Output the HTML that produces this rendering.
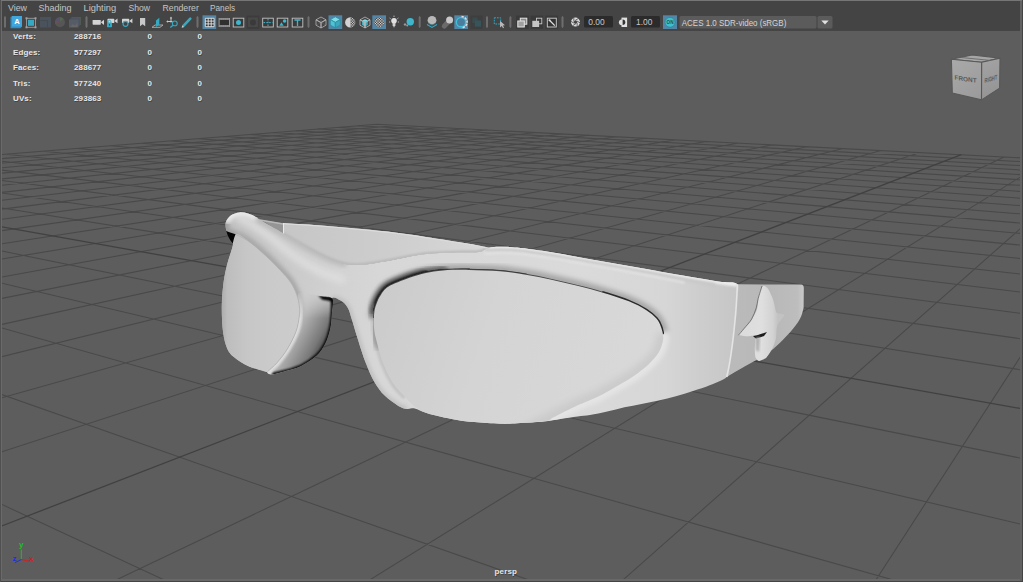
<!DOCTYPE html>
<html><head><meta charset="utf-8"><title>persp</title>
<style>
html,body{margin:0;padding:0;background:#444;}
body{width:1023px;height:582px;overflow:hidden;position:relative;font-family:"Liberation Sans",sans-serif;}
svg{position:absolute;left:0;top:0;display:block}
text{font-family:"Liberation Sans",sans-serif}
</style></head><body>
<svg width="1023" height="582" viewBox="0 0 1023 582">
<defs>
<clipPath id="vp"><rect x="2" y="31" width="1018" height="548"/></clipPath>

<linearGradient id="gFrame" x1="226" y1="0" x2="737" y2="0" gradientUnits="userSpaceOnUse">
<stop offset="0" stop-color="#bebebe"/><stop offset="0.1" stop-color="#c8c8c8"/><stop offset="0.22" stop-color="#d2d2d2"/><stop offset="0.3" stop-color="#d7d7d7"/><stop offset="0.7" stop-color="#dadada"/><stop offset="0.86" stop-color="#d6d6d6"/><stop offset="0.93" stop-color="#cdcdcd"/><stop offset="1" stop-color="#c6c6c6"/></linearGradient>
<linearGradient id="gLensL" x1="222" y1="300" x2="300" y2="300" gradientUnits="userSpaceOnUse">
<stop offset="0" stop-color="#aeaeae"/><stop offset="0.07" stop-color="#bdbdbd"/><stop offset="0.3" stop-color="#c6c6c6"/><stop offset="0.6" stop-color="#cacaca"/><stop offset="1" stop-color="#cccccc"/></linearGradient>
<linearGradient id="gLensR" x1="380" y1="290" x2="660" y2="380" gradientUnits="userSpaceOnUse">
<stop offset="0" stop-color="#cbcbcb"/><stop offset="0.4" stop-color="#d4d4d4"/><stop offset="1" stop-color="#d9d9d9"/></linearGradient>
<linearGradient id="gArmIn" x1="283" y1="0" x2="488" y2="0" gradientUnits="userSpaceOnUse">
<stop offset="0" stop-color="#c6c6c6"/><stop offset="0.5" stop-color="#cdcdcd"/><stop offset="1" stop-color="#d8d8d8"/></linearGradient>
<linearGradient id="gNose" x1="285" y1="320" x2="330" y2="345" gradientUnits="userSpaceOnUse">
<stop offset="0" stop-color="#d8d8d8"/><stop offset="0.3" stop-color="#b4b4b4"/><stop offset="0.75" stop-color="#787878"/><stop offset="1" stop-color="#383838"/></linearGradient>
<linearGradient id="gArmR" x1="737" y1="0" x2="804" y2="0" gradientUnits="userSpaceOnUse">
<stop offset="0" stop-color="#bababa"/><stop offset="0.5" stop-color="#b8b8b8"/><stop offset="0.9" stop-color="#bdbdbd"/><stop offset="1" stop-color="#cacaca"/></linearGradient>
<linearGradient id="gProp" x1="745" y1="0" x2="778" y2="0" gradientUnits="userSpaceOnUse">
<stop offset="0" stop-color="#dcdcdc"/><stop offset="0.5" stop-color="#dfdfdf"/><stop offset="0.85" stop-color="#d2d2d2"/><stop offset="1" stop-color="#c2c2c2"/></linearGradient>
<linearGradient id="gCubeF" x1="952" y1="60" x2="981" y2="99" gradientUnits="userSpaceOnUse"><stop offset="0" stop-color="#a9a9a9"/><stop offset="1" stop-color="#9a9a9a"/></linearGradient><linearGradient id="gCubeR" x1="982" y1="62" x2="999" y2="95" gradientUnits="userSpaceOnUse"><stop offset="0" stop-color="#a2a2a2"/><stop offset="1" stop-color="#949494"/></linearGradient><filter id="b04"><feGaussianBlur stdDeviation="0.45"/></filter><filter id="b08"><feGaussianBlur stdDeviation="0.7"/></filter><filter id="b25"><feGaussianBlur stdDeviation="2.6"/></filter><filter id="b1"><feGaussianBlur stdDeviation="1"/></filter>
<filter id="b2"><feGaussianBlur stdDeviation="2"/></filter>
<filter id="b3"><feGaussianBlur stdDeviation="3.5"/></filter>
<linearGradient id="gFade" x1="0" y1="290" x2="0" y2="318" gradientUnits="userSpaceOnUse"><stop offset="0" stop-color="#000"/><stop offset="1" stop-color="#fff"/></linearGradient>
<mask id="mNose" maskUnits="userSpaceOnUse" x="260" y="285" width="80" height="95"><rect x="260" y="285" width="80" height="95" fill="url(#gFade)"/></mask>
<clipPath id="cFrame"><path d="M226.5 230.6C225.8 228.8 225.1 224.9 225.8 222.3C226.6 219.8 228.7 217.0 231.0 215.3C233.3 213.7 236.6 212.7 239.4 212.4C242.2 212.1 245.2 212.7 248.0 213.5C250.8 214.3 254.4 216.1 256.5 217.2C258.6 218.3 255.8 217.4 260.3 220.1C264.8 222.8 276.7 229.6 283.5 233.6C290.3 237.6 295.2 240.5 301.0 243.8C306.8 247.1 312.8 250.5 318.1 253.2C323.4 255.9 328.3 258.4 333.0 260.2C337.7 262.0 341.4 263.4 346.2 264.2C351.0 265.0 354.4 265.4 361.7 264.8C369.0 264.2 379.3 262.2 390.0 260.4C400.7 258.6 414.2 255.3 425.9 254.0C437.6 252.7 451.5 252.6 460.3 252.3C469.1 252.0 474.8 252.4 478.7 252.0C482.6 251.6 482.2 250.8 484.0 250.0C485.8 249.2 486.6 248.0 489.3 247.5C492.0 247.0 495.4 246.8 500.0 246.8C504.6 246.8 508.6 246.7 517.2 247.6C525.8 248.5 540.0 250.5 551.5 252.3C563.0 254.1 574.4 256.4 585.9 258.4C597.4 260.4 608.8 262.4 620.3 264.4C631.8 266.4 643.9 268.5 654.6 270.4C665.3 272.3 673.7 273.9 684.4 275.8C695.1 277.7 709.9 280.2 718.7 281.6C727.5 283.0 734.4 281.2 737.4 284.3C740.4 287.4 736.9 295.0 736.6 300.0C736.3 305.0 736.1 309.1 735.6 314.4C735.1 319.6 734.5 325.8 733.9 331.5C733.3 337.2 732.6 343.0 731.8 348.7C731.0 354.4 730.0 361.2 729.1 365.9C728.2 370.6 729.8 373.8 726.7 377.0C723.6 380.2 715.9 382.7 710.3 385.0C704.7 387.3 698.8 389.1 693.1 391.0C687.4 392.9 681.6 394.6 675.9 396.2C670.2 397.8 664.4 399.1 658.7 400.4C653.0 401.7 647.2 402.8 641.5 403.9C635.8 405.0 630.1 406.0 624.4 407.3C618.7 408.6 612.9 410.3 607.2 411.6C601.5 412.9 595.0 414.2 590.0 415.0C585.0 415.8 582.5 415.8 577.5 416.5C572.5 417.2 566.0 418.1 560.3 419.0C554.6 419.9 550.3 420.9 543.1 421.6C535.9 422.3 524.5 422.9 517.3 423.3C510.1 423.7 507.2 424.0 500.1 423.8C493.0 423.6 481.5 422.8 474.4 422.1C467.2 421.5 462.9 420.8 457.2 419.9C451.5 419.0 445.2 417.7 440.0 416.5C434.8 415.3 430.1 414.1 425.9 412.8C421.7 411.5 417.8 409.1 414.7 408.5C411.6 407.9 409.7 409.4 407.0 409.0C404.3 408.6 402.1 408.1 398.4 405.9C394.7 403.7 388.7 399.6 384.7 395.6C380.7 391.6 377.5 387.3 374.4 381.9C371.2 376.5 368.7 370.4 365.8 363.0C362.9 355.6 359.5 344.4 357.2 337.2C354.9 330.0 353.6 324.9 352.0 320.0C350.4 315.1 349.5 310.7 347.6 307.5C345.7 304.3 343.3 302.2 340.7 300.6C338.1 299.0 333.5 296.3 332.1 298.0C330.7 299.7 332.4 305.9 332.1 310.9C331.8 315.9 331.5 322.7 330.4 328.1C329.3 333.6 327.6 339.0 325.3 343.6C323.0 348.2 320.7 351.9 316.7 355.6C312.7 359.3 306.9 363.2 301.2 365.9C295.5 368.6 287.3 370.5 282.3 371.9C277.3 373.3 273.8 374.2 271.2 374.2C268.6 374.2 270.8 373.3 266.9 371.9C263.0 370.5 253.4 368.3 248.0 365.9C242.6 363.5 237.6 360.2 234.2 357.3C230.8 354.4 229.2 353.0 227.3 348.7C225.4 344.4 223.9 338.6 223.0 331.5C222.1 324.4 221.7 314.0 221.8 305.8C221.9 297.6 222.7 289.1 223.6 282.3C224.5 275.5 225.6 270.7 227.0 265.0C228.4 259.3 230.9 252.5 232.2 248.0C233.5 243.5 235.4 240.5 235.0 238.0C234.6 235.5 231.4 234.2 230.0 233.0C228.6 231.8 227.2 232.4 226.5 230.6Z"/></clipPath>
<clipPath id="cLensR"><path d="M373.9 318.0C374.0 315.2 374.1 312.5 374.6 310.0C375.1 307.5 375.8 305.4 376.8 303.0C377.8 300.6 378.6 298.2 380.5 295.5C382.4 292.8 383.6 289.7 388.3 286.8C393.0 283.9 402.4 280.4 408.7 278.1C415.0 275.8 420.2 274.3 425.9 273.0C431.6 271.7 435.9 270.9 443.1 270.4C450.3 269.9 459.4 269.8 468.9 269.9C478.4 270.0 490.5 270.4 500.0 271.2C509.5 272.0 517.2 273.3 525.8 274.7C534.4 276.1 542.9 277.9 551.5 279.8C560.1 281.7 568.7 283.7 577.3 285.8C585.9 287.9 594.5 290.1 603.1 292.7C611.7 295.3 621.8 298.4 628.9 301.3C636.0 304.2 641.4 307.0 646.0 309.9C650.6 312.8 653.9 315.8 656.4 318.5C658.9 321.2 659.7 323.8 660.7 326.2C661.7 328.6 662.2 330.6 662.6 333.0C663.0 335.4 663.6 337.1 663.0 340.3C662.4 343.5 661.1 348.3 658.7 352.3C656.3 356.3 652.7 360.4 648.4 364.4C644.1 368.4 638.3 372.7 632.9 376.4C627.5 380.1 621.5 383.4 615.8 386.7C610.1 390.0 605.0 393.1 598.6 396.2C592.2 399.3 585.0 401.8 577.5 405.3C570.0 408.8 558.6 414.7 553.4 417.3C548.2 419.9 552.5 419.8 546.5 420.8C540.5 421.8 525.0 422.8 517.3 423.3C509.6 423.8 507.2 424.0 500.1 423.8C493.0 423.6 481.5 422.8 474.4 422.1C467.2 421.5 462.9 420.8 457.2 419.9C451.5 419.0 445.2 417.7 440.0 416.5C434.8 415.3 430.1 414.5 425.9 412.8C421.7 411.1 418.1 409.1 414.7 406.5C411.3 403.9 408.9 401.1 405.3 397.3C401.7 393.5 397.0 389.3 393.3 383.6C389.6 377.9 385.9 370.6 383.0 363.0C380.1 355.4 377.3 344.0 375.8 338.0C374.3 332.0 374.3 330.3 374.0 327.0C373.7 323.7 373.8 320.8 373.9 318.0Z"/></clipPath>
<clipPath id="cLensL"><path d="M235.6 234.2C238.5 233.2 244.2 238.2 249.4 241.9C254.6 245.6 261.4 251.8 266.5 256.5C271.6 261.2 276.3 266.0 280.3 270.3C284.3 274.6 287.9 278.3 290.6 282.3C293.3 286.3 295.2 290.4 296.6 294.3C298.1 298.2 298.9 302.4 299.3 306.0C299.8 309.6 299.9 311.8 299.3 316.0C298.8 320.2 298.0 326.1 296.0 331.5C294.0 336.9 290.6 343.5 287.5 348.7C284.4 353.9 280.5 358.7 277.2 362.5C273.9 366.3 269.4 369.9 267.7 371.5C266.0 373.1 270.2 372.8 266.9 371.9C263.6 371.0 253.4 368.3 248.0 365.9C242.6 363.5 237.6 360.2 234.2 357.3C230.8 354.4 229.2 353.0 227.3 348.7C225.4 344.4 223.9 338.6 223.0 331.5C222.1 324.4 221.7 314.0 221.8 305.8C221.9 297.6 222.7 289.1 223.6 282.3C224.5 275.5 225.6 270.7 227.0 265.0C228.4 259.3 230.8 253.1 232.2 248.0C233.6 242.9 232.7 235.2 235.6 234.2Z"/></clipPath>
<clipPath id="cArmIn"><path d="M283.5 223.0C289.4 223.4 307.1 224.4 318.7 225.3C330.3 226.2 341.6 227.1 353.1 228.2C364.6 229.2 375.4 230.1 387.5 231.6C399.6 233.1 412.3 234.9 425.9 236.9C439.5 238.9 458.6 241.9 468.9 243.7C479.2 245.4 484.6 246.8 487.8 247.4L489.3 247.5C488.4 247.9 485.8 249.2 484.0 250.0C482.2 250.8 482.6 251.6 478.7 252.0C474.8 252.4 469.1 252.0 460.3 252.3C451.5 252.6 437.6 252.7 425.9 254.0C414.2 255.3 400.7 258.6 390.0 260.4C379.3 262.2 369.0 264.2 361.7 264.8C354.4 265.4 351.0 265.0 346.2 264.2C341.4 263.4 337.7 262.0 333.0 260.2C328.3 258.4 323.4 255.9 318.1 253.2C312.8 250.5 306.8 247.1 301.0 243.8C295.2 240.5 286.4 235.3 283.5 233.6Z"/></clipPath><clipPath id="cNose"><path d="M298.8 293.0C295.4 295.7 300.0 305.6 299.5 312.0C299.0 318.4 298.0 325.4 296.0 331.5C294.0 337.6 290.6 343.5 287.5 348.7C284.4 353.9 280.5 358.7 277.2 362.5C273.9 366.3 268.7 369.6 267.7 371.5C266.7 373.4 268.8 374.1 271.2 374.2C273.6 374.3 277.3 373.3 282.3 371.9C287.3 370.5 295.5 368.6 301.2 365.9C306.9 363.2 312.7 359.3 316.7 355.6C320.7 351.9 323.0 348.2 325.3 343.6C327.6 339.0 329.3 333.6 330.4 328.1C331.5 322.7 331.8 315.8 332.1 310.9C332.4 306.0 334.1 301.0 332.1 298.5C330.1 296.0 325.6 296.9 320.0 296.0C314.4 295.1 302.2 290.3 298.8 293.0Z"/></clipPath>
<clipPath id="cTex"><circle cx="379.3" cy="22.3" r="5"/></clipPath><clipPath id="cHalf"><circle cx="350.3" cy="22.4" r="5.2"/></clipPath>
</defs>
<rect x="0" y="0" width="1023" height="582" fill="#444444"/>
<rect x="0" y="0" width="1" height="582" fill="#505050"/>
<rect x="1" y="0" width="1021" height="1" fill="#767676"/>
<rect x="1" y="1" width="1" height="580" fill="#6a6a6a"/>
<rect x="1" y="579" width="1021" height="2" fill="#686868"/>
<rect x="1020" y="1" width="2" height="580" fill="#626262"/>
<rect x="2" y="30" width="1018" height="1" fill="#454545"/>
<rect x="2" y="31" width="1018" height="548" fill="#5d5d5d"/>
<g clip-path="url(#vp)">
<path d="M-111155.5 13200.1L-5584.6 605.4M95047.1 13419.6L2447.0 232.2M-101904.5 13209.9L-4557.9 522.5M88646.2 13412.7L2320.3 225.6M-92653.5 13219.8L-3800.6 461.4M82245.4 13405.9L2202.7 219.4M-83402.5 13229.6L-3218.9 414.5M75844.5 13399.1L2093.2 213.7M-74151.5 13239.5L-2758.1 377.3M69443.7 13392.3L1991.1 208.4M-64900.5 13249.3L-2384.1 347.1M63042.8 13385.5L1895.5 203.4M-55649.5 13259.1L-2074.5 322.1M56642.0 13378.7L1805.9 198.8M-46398.5 13269.0L-1813.9 301.1M50241.2 13371.9L1721.8 194.4M-37147.5 13278.8L-1591.5 283.1M43840.3 13365.1L1642.6 190.2M-27896.5 13288.7L-1399.6 267.7M37439.5 13358.2L1567.9 186.4M-18645.5 13298.5L-1232.3 254.2M31038.6 13351.4L1497.4 182.7M-9394.5 13308.4L-1085.1 242.3M24637.8 13344.6L1430.7 179.2M-143.5 13318.2L-954.6 231.7M18236.9 13337.8L1367.6 175.9M9107.5 13328.1L-838.1 222.3M11836.1 13331.0L1307.7 172.8M18358.5 13337.9L-733.4 213.9M5435.2 13324.2L1250.7 169.8M27609.5 13347.8L-639.0 206.3M-965.6 13317.4L1196.6 167.0M36860.5 13357.6L-553.2 199.4M-7366.5 13310.5L1145.0 164.3M46111.5 13367.5L-475.1 193.0M-13767.3 13303.7L1095.9 161.8M55362.4 13377.3L-403.6 187.3M-20168.2 13296.9L1049.0 159.3M64613.4 13387.2L-337.8 182.0M-26569.0 13290.1L1004.1 157.0M83115.4 13406.9L-221.2 172.6M-39370.7 13276.5L920.2 152.6M92366.4 13416.7L-169.2 168.4M-45771.6 13269.7L880.9 150.6M24593.8 3386.1L-120.9 164.5M-52172.4 13262.8L843.1 148.6M12579.4 1675.1L-75.8 160.8M-58573.3 13256.0L806.9 146.7M8721.6 1125.7L-33.6 157.4M-64974.1 13249.2L772.1 144.9M6819.2 854.8L5.8 154.2M-71375.0 13242.4L738.7 143.1M5686.0 693.4L42.9 151.2M-77775.8 13235.6L706.5 141.5M4934.0 586.3L77.8 148.4M-84176.7 13228.8L675.5 139.9M4398.6 510.1L110.6 145.8M-90577.5 13222.0L645.6 138.3M3997.9 453.0L141.6 143.3M-96978.4 13215.2L616.8 136.8M3686.8 408.7L170.9 140.9M-103379.2 13208.3L589.0 135.3M3438.2 373.3L198.6 138.7M-109780.0 13201.5L562.2 133.9M3235.1 344.4L225.0 136.5M-34306.7 4032.0L536.3 132.6M3066.0 320.3L249.9 134.5M-18622.2 2160.8L511.2 131.3M2923.0 299.9L273.7 132.6M-12973.4 1486.9L487.0 130.0M2800.5 282.5L296.3 130.8M-10062.9 1139.7L463.5 128.8M2694.4 267.4L317.8 129.1M-8288.1 927.9L440.8 127.6M2601.6 254.2L338.4 127.4M-7092.7 785.3L418.8 126.5M2519.8 242.5L358.0 125.8M-6232.9 682.7L397.5 125.4M2447.0 232.2L376.8 124.3M-5584.6 605.4L376.8 124.3" stroke="#494949" stroke-width="1.05" fill="none"/>
<path d="M73864.4 13397.0L-277.2 177.1M-32969.9 13283.3L961.3 154.7" stroke="#414141" stroke-width="1.3" fill="none"/>

<g id="glasses">
<path d="M257 217.2L259.6 219.5L283.3 223.4L283.3 234.2Z" fill="#959595"/><path d="M259.6 220L283.3 224" stroke="#b8b8b8" stroke-width="1.4"/>
<path d="M283.5 223.0C289.4 223.4 307.1 224.4 318.7 225.3C330.3 226.2 341.6 227.1 353.1 228.2C364.6 229.2 375.4 230.1 387.5 231.6C399.6 233.1 412.3 234.9 425.9 236.9C439.5 238.9 458.6 241.9 468.9 243.7C479.2 245.4 484.6 246.8 487.8 247.4L489.3 247.5C488.4 247.9 485.8 249.2 484.0 250.0C482.2 250.8 482.6 251.6 478.7 252.0C474.8 252.4 469.1 252.0 460.3 252.3C451.5 252.6 437.6 252.7 425.9 254.0C414.2 255.3 400.7 258.6 390.0 260.4C379.3 262.2 369.0 264.2 361.7 264.8C354.4 265.4 351.0 265.0 346.2 264.2C341.4 263.4 337.7 262.0 333.0 260.2C328.3 258.4 323.4 255.9 318.1 253.2C312.8 250.5 306.8 247.1 301.0 243.8C295.2 240.5 286.4 235.3 283.5 233.6Z" fill="url(#gArmIn)"/>
<g clip-path="url(#cArmIn)"><path d="M283.5 233.6C286.4 235.3 295.2 240.5 301.0 243.8C306.8 247.1 312.8 250.5 318.1 253.2C323.4 255.9 328.3 258.4 333.0 260.2C337.7 262.0 341.4 263.4 346.2 264.2C351.0 265.0 354.4 265.4 361.7 264.8C369.0 264.2 379.3 262.2 390.0 260.4C400.7 258.6 414.2 255.3 425.9 254.0C437.6 252.7 451.5 252.6 460.3 252.3C469.1 252.0 474.8 252.4 478.7 252.0C482.6 251.6 482.2 250.8 484.0 250.0C485.8 249.2 488.4 247.9 489.3 247.5" stroke="#b9b9b9" stroke-width="3.4" fill="none" filter="url(#b1)"/>
<path d="M283.5 223.0C289.4 223.4 307.1 224.4 318.7 225.3C330.3 226.2 341.6 227.1 353.1 228.2C364.6 229.2 375.4 230.1 387.5 231.6C399.6 233.1 412.3 234.9 425.9 236.9C439.5 238.9 458.6 241.9 468.9 243.7C479.2 245.4 484.6 246.8 487.8 247.4" stroke="#dcdcdc" stroke-width="2.5" fill="none" filter="url(#b08)"/></g>
<path d="M283.5 223L283.5 234.4" stroke="#e8e8e8" stroke-width="1"/>
<path d="M737.4 284.3L801 284.6Q803.8 284.8 803.8 288L803.6 307.8C803.1 309.4 802.4 313.8 800.7 317.3C799.0 320.8 796.7 324.4 793.2 328.6C789.8 332.9 784.5 338.5 780.0 342.8C775.5 347.1 771.8 350.6 766.0 354.5C760.2 358.4 751.5 362.6 745.0 366.3C738.5 370.1 729.8 375.2 726.7 377.0L726.7 377.0L729.1 365.9L731.8 348.7L733.9 331.5L735.6 314.4L736.6 300.0Z" fill="url(#gArmR)"/>
<path d="M226.5 230.6C225.8 228.8 225.1 224.9 225.8 222.3C226.6 219.8 228.7 217.0 231.0 215.3C233.3 213.7 236.6 212.7 239.4 212.4C242.2 212.1 245.2 212.7 248.0 213.5C250.8 214.3 254.4 216.1 256.5 217.2C258.6 218.3 255.8 217.4 260.3 220.1C264.8 222.8 276.7 229.6 283.5 233.6C290.3 237.6 295.2 240.5 301.0 243.8C306.8 247.1 312.8 250.5 318.1 253.2C323.4 255.9 328.3 258.4 333.0 260.2C337.7 262.0 341.4 263.4 346.2 264.2C351.0 265.0 354.4 265.4 361.7 264.8C369.0 264.2 379.3 262.2 390.0 260.4C400.7 258.6 414.2 255.3 425.9 254.0C437.6 252.7 451.5 252.6 460.3 252.3C469.1 252.0 474.8 252.4 478.7 252.0C482.6 251.6 482.2 250.8 484.0 250.0C485.8 249.2 486.6 248.0 489.3 247.5C492.0 247.0 495.4 246.8 500.0 246.8C504.6 246.8 508.6 246.7 517.2 247.6C525.8 248.5 540.0 250.5 551.5 252.3C563.0 254.1 574.4 256.4 585.9 258.4C597.4 260.4 608.8 262.4 620.3 264.4C631.8 266.4 643.9 268.5 654.6 270.4C665.3 272.3 673.7 273.9 684.4 275.8C695.1 277.7 709.9 280.2 718.7 281.6C727.5 283.0 734.4 281.2 737.4 284.3C740.4 287.4 736.9 295.0 736.6 300.0C736.3 305.0 736.1 309.1 735.6 314.4C735.1 319.6 734.5 325.8 733.9 331.5C733.3 337.2 732.6 343.0 731.8 348.7C731.0 354.4 730.0 361.2 729.1 365.9C728.2 370.6 729.8 373.8 726.7 377.0C723.6 380.2 715.9 382.7 710.3 385.0C704.7 387.3 698.8 389.1 693.1 391.0C687.4 392.9 681.6 394.6 675.9 396.2C670.2 397.8 664.4 399.1 658.7 400.4C653.0 401.7 647.2 402.8 641.5 403.9C635.8 405.0 630.1 406.0 624.4 407.3C618.7 408.6 612.9 410.3 607.2 411.6C601.5 412.9 595.0 414.2 590.0 415.0C585.0 415.8 582.5 415.8 577.5 416.5C572.5 417.2 566.0 418.1 560.3 419.0C554.6 419.9 550.3 420.9 543.1 421.6C535.9 422.3 524.5 422.9 517.3 423.3C510.1 423.7 507.2 424.0 500.1 423.8C493.0 423.6 481.5 422.8 474.4 422.1C467.2 421.5 462.9 420.8 457.2 419.9C451.5 419.0 445.2 417.7 440.0 416.5C434.8 415.3 430.1 414.1 425.9 412.8C421.7 411.5 417.8 409.1 414.7 408.5C411.6 407.9 409.7 409.4 407.0 409.0C404.3 408.6 402.1 408.1 398.4 405.9C394.7 403.7 388.7 399.6 384.7 395.6C380.7 391.6 377.5 387.3 374.4 381.9C371.2 376.5 368.7 370.4 365.8 363.0C362.9 355.6 359.5 344.4 357.2 337.2C354.9 330.0 353.6 324.9 352.0 320.0C350.4 315.1 349.5 310.7 347.6 307.5C345.7 304.3 343.3 302.2 340.7 300.6C338.1 299.0 333.5 296.3 332.1 298.0C330.7 299.7 332.4 305.9 332.1 310.9C331.8 315.9 331.5 322.7 330.4 328.1C329.3 333.6 327.6 339.0 325.3 343.6C323.0 348.2 320.7 351.9 316.7 355.6C312.7 359.3 306.9 363.2 301.2 365.9C295.5 368.6 287.3 370.5 282.3 371.9C277.3 373.3 273.8 374.2 271.2 374.2C268.6 374.2 270.8 373.3 266.9 371.9C263.0 370.5 253.4 368.3 248.0 365.9C242.6 363.5 237.6 360.2 234.2 357.3C230.8 354.4 229.2 353.0 227.3 348.7C225.4 344.4 223.9 338.6 223.0 331.5C222.1 324.4 221.7 314.0 221.8 305.8C221.9 297.6 222.7 289.1 223.6 282.3C224.5 275.5 225.6 270.7 227.0 265.0C228.4 259.3 230.9 252.5 232.2 248.0C233.5 243.5 235.4 240.5 235.0 238.0C234.6 235.5 231.4 234.2 230.0 233.0C228.6 231.8 227.2 232.4 226.5 230.6Z" fill="url(#gFrame)"/>
<g clip-path="url(#cFrame)">
<path d="M235.6 234.2C237.9 235.5 244.2 238.2 249.4 241.9C254.6 245.6 261.4 251.8 266.5 256.5C271.6 261.2 276.3 266.0 280.3 270.3C284.3 274.6 287.9 278.3 290.6 282.3C293.3 286.3 295.2 290.4 296.6 294.3C298.1 298.2 298.9 302.4 299.3 306.0C299.8 309.6 299.9 311.8 299.3 316.0C298.8 320.2 298.0 326.1 296.0 331.5C294.0 336.9 290.6 343.5 287.5 348.7C284.4 353.9 280.5 358.7 277.2 362.5C273.9 366.3 269.3 370.0 267.7 371.5" stroke="#a8a8a8" stroke-width="8" fill="none" filter="url(#b2)"/>
<path d="M225.5 220L226.3 231L236 234.5" stroke="#9c9c9c" stroke-width="6" fill="none" filter="url(#b2)"/>
<path d="M236.0 217.0C238.3 218.1 244.9 220.6 250.0 223.5C255.1 226.4 259.4 229.0 266.5 234.2C273.6 239.4 283.7 248.8 292.3 254.8C300.9 260.8 309.2 266.0 318.0 270.3C326.8 274.6 340.5 278.9 345.0 280.6" stroke="#e0e0e0" stroke-width="8" fill="none" filter="url(#b3)" opacity="0.9"/>
<path d="M256.5 217.2C257.1 217.7 255.8 217.4 260.3 220.1C264.8 222.8 276.7 229.6 283.5 233.6C290.3 237.6 295.2 240.5 301.0 243.8C306.8 247.1 312.8 250.5 318.1 253.2C323.4 255.9 328.3 258.4 333.0 260.2C337.7 262.0 344.0 263.5 346.2 264.2" stroke="#bababa" stroke-width="6" fill="none" filter="url(#b2)"/>
<path d="M225.8 222.3C226.7 221.1 228.7 217.0 231.0 215.3C233.3 213.7 236.6 212.7 239.4 212.4C242.2 212.1 245.2 212.7 248.0 213.5C250.8 214.3 255.1 216.6 256.5 217.2" stroke="#ececec" stroke-width="7" fill="none" filter="url(#b2)"/>
<path d="M489.3 247.5C491.1 247.4 495.4 246.8 500.0 246.8C504.6 246.8 508.6 246.7 517.2 247.6C525.8 248.5 540.0 250.5 551.5 252.3C563.0 254.1 574.4 256.4 585.9 258.4C597.4 260.4 608.8 262.4 620.3 264.4C631.8 266.4 643.9 268.5 654.6 270.4C665.3 272.3 673.7 273.9 684.4 275.8C695.1 277.7 709.9 280.2 718.7 281.6C727.5 283.0 734.3 283.9 737.4 284.3" stroke="#ececec" stroke-width="5" fill="none" filter="url(#b1)"/>
<path d="M373.9 318.0C374.0 316.7 374.1 312.5 374.6 310.0C375.1 307.5 375.8 305.4 376.8 303.0C377.8 300.6 378.6 298.2 380.5 295.5C382.4 292.8 383.6 289.7 388.3 286.8C393.0 283.9 402.4 280.4 408.7 278.1C415.0 275.8 420.2 274.3 425.9 273.0C431.6 271.7 435.9 270.9 443.1 270.4C450.3 269.9 459.4 269.8 468.9 269.9C478.4 270.0 490.5 270.4 500.0 271.2C509.5 272.0 517.2 273.3 525.8 274.7C534.4 276.1 542.9 277.9 551.5 279.8C560.1 281.7 568.7 283.7 577.3 285.8C585.9 287.9 594.5 290.1 603.1 292.7C611.7 295.3 621.8 298.4 628.9 301.3C636.0 304.2 641.4 307.0 646.0 309.9C650.6 312.8 653.9 315.8 656.4 318.5C658.9 321.2 659.7 323.8 660.7 326.2C661.7 328.6 662.3 331.9 662.6 333.0" stroke="#a6a6a6" stroke-width="11" fill="none" filter="url(#b25)"/>
<path d="M662.6 333.0C662.7 334.2 663.6 337.1 663.0 340.3C662.4 343.5 661.1 348.3 658.7 352.3C656.3 356.3 652.7 360.4 648.4 364.4C644.1 368.4 638.3 372.7 632.9 376.4C627.5 380.1 621.5 383.4 615.8 386.7C610.1 390.0 605.0 393.1 598.6 396.2C592.2 399.3 585.0 401.8 577.5 405.3C570.0 408.8 558.6 414.7 553.4 417.3C548.2 419.9 549.4 419.4 546.5 420.8C543.6 422.2 539.6 424.3 536.0 426.0C532.4 427.7 526.8 430.2 525.0 431.0" stroke="#e4e4e4" stroke-width="11" fill="none" filter="url(#b2)"/>
<path d="M407.0 409.0C405.6 408.5 402.1 408.1 398.4 405.9C394.7 403.7 388.7 399.6 384.7 395.6C380.7 391.6 377.5 387.3 374.4 381.9C371.2 376.5 368.7 370.4 365.8 363.0C362.9 355.6 359.5 344.4 357.2 337.2C354.9 330.0 353.6 324.9 352.0 320.0C350.4 315.1 349.5 310.7 347.6 307.5C345.7 304.3 343.3 302.2 340.7 300.6C338.1 299.0 333.5 298.4 332.1 298.0" stroke="#bdbdbd" stroke-width="5" fill="none" filter="url(#b2)"/>
<path d="M405.3 397.3C403.3 395.0 397.0 389.3 393.3 383.6C389.6 377.9 385.9 370.6 383.0 363.0C380.1 355.4 377.3 344.0 375.8 338.0C374.3 332.0 374.3 330.3 374.0 327.0C373.7 323.7 373.9 319.5 373.9 318.0" stroke="#c4c4c4" stroke-width="6" fill="none" filter="url(#b1)"/>
<path d="M373.9 318.0C374.0 316.7 374.1 312.5 374.6 310.0C375.1 307.5 375.8 305.4 376.8 303.0C377.8 300.6 378.6 298.2 380.5 295.5C382.4 292.8 383.6 289.7 388.3 286.8C393.0 283.9 402.4 280.4 408.7 278.1C415.0 275.8 423.0 273.9 425.9 273.0" stroke="#505050" stroke-width="9" fill="none" filter="url(#b2)" opacity="0.6"/>
<path d="M378.5 346.0C378.1 344.7 376.6 341.2 375.8 338.0C375.1 334.8 374.3 330.3 374.0 327.0C373.7 323.7 373.8 320.8 373.9 318.0C374.0 315.2 374.1 312.5 374.6 310.0C375.1 307.5 376.4 304.2 376.8 303.0" stroke="#7a7a7a" stroke-width="7" fill="none" filter="url(#b25)" opacity="0.6" stroke-linecap="round"/>
<path d="M374.6 310.0C375.0 308.8 375.8 305.4 376.8 303.0C377.8 300.6 378.6 298.2 380.5 295.5C382.4 292.8 383.6 289.7 388.3 286.8C393.0 283.9 402.4 280.4 408.7 278.1C415.0 275.8 420.2 274.3 425.9 273.0C431.6 271.7 440.2 270.8 443.1 270.4" stroke="#404040" stroke-width="9" fill="none" filter="url(#b2)" opacity="0.7" stroke-linecap="round"/>
<path d="M376.8 303.0C377.4 301.8 378.6 298.2 380.5 295.5C382.4 292.8 383.6 289.7 388.3 286.8C393.0 283.9 402.4 280.4 408.7 278.1C415.0 275.8 423.0 273.9 425.9 273.0" stroke="#0c0c0c" stroke-width="4.2" fill="none" filter="url(#b1)" stroke-linecap="round"/>
<path d="M374.6 310.0C375.0 308.8 375.8 305.4 376.8 303.0C377.8 300.6 378.6 298.2 380.5 295.5C382.4 292.8 383.6 289.7 388.3 286.8C393.0 283.9 402.4 280.4 408.7 278.1C415.0 275.8 420.2 274.3 425.9 273.0C431.6 271.7 435.9 270.9 443.1 270.4C450.3 269.9 464.6 270.0 468.9 269.9" stroke="#1c1c1c" stroke-width="3" fill="none" filter="url(#b08)" stroke-linecap="round"/>
<path d="M374.6 310.0C375.0 308.8 375.8 305.4 376.8 303.0C377.8 300.6 378.6 298.2 380.5 295.5C382.4 292.8 383.6 289.7 388.3 286.8C393.0 283.9 402.4 280.4 408.7 278.1C415.0 275.8 420.2 274.3 425.9 273.0C431.6 271.7 435.9 270.9 443.1 270.4C450.3 269.9 459.4 269.8 468.9 269.9C478.4 270.0 490.5 270.4 500.0 271.2C509.5 272.0 521.5 274.1 525.8 274.7" stroke="#2c2c2c" stroke-width="2.4" fill="none" filter="url(#b08)" stroke-linecap="round"/>
<path d="M373.9 318.0C374.0 316.7 374.1 312.5 374.6 310.0C375.1 307.5 375.8 305.4 376.8 303.0C377.8 300.6 378.6 298.2 380.5 295.5C382.4 292.8 383.6 289.7 388.3 286.8C393.0 283.9 402.4 280.4 408.7 278.1C415.0 275.8 420.2 274.3 425.9 273.0C431.6 271.7 435.9 270.9 443.1 270.4C450.3 269.9 459.4 269.8 468.9 269.9C478.4 270.0 490.5 270.4 500.0 271.2C509.5 272.0 517.2 273.3 525.8 274.7C534.4 276.1 542.9 277.9 551.5 279.8C560.1 281.7 568.7 283.7 577.3 285.8C585.9 287.9 594.5 290.1 603.1 292.7C611.7 295.3 621.8 298.4 628.9 301.3C636.0 304.2 641.4 307.0 646.0 309.9C650.6 312.8 653.9 315.8 656.4 318.5C658.9 321.2 659.7 323.8 660.7 326.2C661.7 328.6 662.3 331.9 662.6 333.0" stroke="#464646" stroke-width="1.7" fill="none"/>
<path d="M603.1 292.7C607.4 294.1 621.8 298.4 628.9 301.3C636.0 304.2 641.4 307.0 646.0 309.9C650.6 312.8 653.9 315.8 656.4 318.5C658.9 321.2 659.7 323.8 660.7 326.2C661.7 328.6 662.3 331.9 662.6 333.0" stroke="#2a2a2a" stroke-width="3" fill="none" filter="url(#b08)" stroke-linecap="round"/>
<path d="M486.0 250.2C488.3 250.1 494.8 249.7 500.0 249.8C505.2 249.9 508.6 249.7 517.2 250.6C525.8 251.5 540.0 253.4 551.5 255.2C563.0 257.0 574.4 259.2 585.9 261.2C597.4 263.2 608.8 265.2 620.3 267.3C631.8 269.4 643.9 271.6 654.6 273.6C665.3 275.6 674.3 277.5 684.4 279.3C694.5 281.1 709.9 283.7 715.0 284.6" stroke="#c6c6c6" stroke-width="3" fill="none" filter="url(#b1)" opacity="0.8"/>
<path d="M484.0 253.5C486.7 253.4 494.5 252.8 500.0 252.8C505.5 252.8 508.6 252.5 517.2 253.4C525.8 254.3 540.0 256.2 551.5 258.0C563.0 259.8 574.4 262.0 585.9 264.0C597.4 266.0 608.8 268.1 620.3 270.2C631.8 272.3 643.9 274.6 654.6 276.7C665.3 278.8 679.4 281.7 684.4 282.7" stroke="#e6e6e6" stroke-width="2.2" fill="none" filter="url(#b1)" opacity="0.75"/>
</g>
<g mask="url(#mNose)"><path d="M298.8 293.0C295.4 295.7 300.0 305.6 299.5 312.0C299.0 318.4 298.0 325.4 296.0 331.5C294.0 337.6 290.6 343.5 287.5 348.7C284.4 353.9 280.5 358.7 277.2 362.5C273.9 366.3 268.7 369.6 267.7 371.5C266.7 373.4 268.8 374.1 271.2 374.2C273.6 374.3 277.3 373.3 282.3 371.9C287.3 370.5 295.5 368.6 301.2 365.9C306.9 363.2 312.7 359.3 316.7 355.6C320.7 351.9 323.0 348.2 325.3 343.6C327.6 339.0 329.3 333.6 330.4 328.1C331.5 322.7 331.8 315.8 332.1 310.9C332.4 306.0 334.1 301.0 332.1 298.5C330.1 296.0 325.6 296.9 320.0 296.0C314.4 295.1 302.2 290.3 298.8 293.0Z" fill="url(#gNose)"/></g>
<g clip-path="url(#cNose)">
<path d="M332.1 298.0C332.1 300.1 332.4 305.9 332.1 310.9C331.8 315.9 331.5 322.7 330.4 328.1C329.3 333.6 327.6 339.0 325.3 343.6C323.0 348.2 320.7 351.9 316.7 355.6C312.7 359.3 306.9 363.2 301.2 365.9C295.5 368.6 287.3 370.5 282.3 371.9C277.3 373.3 273.1 373.8 271.2 374.2" stroke="#050505" stroke-width="2.8" fill="none" filter="url(#b1)"/>
<path d="M318 295L333 297.2L333 301.5L322 299.5Z" fill="#000" filter="url(#b1)"/>
<g mask="url(#mNose)"><path d="M290.6 282.3C291.6 284.3 295.2 290.4 296.6 294.3C298.1 298.2 298.9 302.4 299.3 306.0C299.8 309.6 299.9 311.8 299.3 316.0C298.8 320.2 298.0 326.1 296.0 331.5C294.0 336.9 290.6 343.5 287.5 348.7C284.4 353.9 280.5 358.7 277.2 362.5C273.9 366.3 268.7 369.6 267.7 371.5C266.7 373.4 270.6 373.8 271.2 374.2" stroke="#dcdcdc" stroke-width="6.5" fill="none" filter="url(#b1)"/></g>
</g>
<path d="M235.6 234.2C238.5 233.2 244.2 238.2 249.4 241.9C254.6 245.6 261.4 251.8 266.5 256.5C271.6 261.2 276.3 266.0 280.3 270.3C284.3 274.6 287.9 278.3 290.6 282.3C293.3 286.3 295.2 290.4 296.6 294.3C298.1 298.2 298.9 302.4 299.3 306.0C299.8 309.6 299.9 311.8 299.3 316.0C298.8 320.2 298.0 326.1 296.0 331.5C294.0 336.9 290.6 343.5 287.5 348.7C284.4 353.9 280.5 358.7 277.2 362.5C273.9 366.3 269.4 369.9 267.7 371.5C266.0 373.1 270.2 372.8 266.9 371.9C263.6 371.0 253.4 368.3 248.0 365.9C242.6 363.5 237.6 360.2 234.2 357.3C230.8 354.4 229.2 353.0 227.3 348.7C225.4 344.4 223.9 338.6 223.0 331.5C222.1 324.4 221.7 314.0 221.8 305.8C221.9 297.6 222.7 289.1 223.6 282.3C224.5 275.5 225.6 270.7 227.0 265.0C228.4 259.3 230.8 253.1 232.2 248.0C233.6 242.9 232.7 235.2 235.6 234.2Z" fill="url(#gLensL)"/>
<path d="M235.6 234.2C237.9 235.5 244.2 238.2 249.4 241.9C254.6 245.6 261.4 251.8 266.5 256.5C271.6 261.2 276.3 266.0 280.3 270.3C284.3 274.6 287.9 278.3 290.6 282.3C293.3 286.3 295.2 290.4 296.6 294.3C298.1 298.2 298.9 302.4 299.3 306.0C299.8 309.6 299.9 311.8 299.3 316.0C298.8 320.2 298.0 326.1 296.0 331.5C294.0 336.9 290.6 343.5 287.5 348.7C284.4 353.9 280.5 358.7 277.2 362.5C273.9 366.3 269.3 370.0 267.7 371.5" stroke="#b0b0b0" stroke-width="0.8" fill="none"/>
<path d="M373.9 318.0C374.0 315.2 374.1 312.5 374.6 310.0C375.1 307.5 375.8 305.4 376.8 303.0C377.8 300.6 378.6 298.2 380.5 295.5C382.4 292.8 383.6 289.7 388.3 286.8C393.0 283.9 402.4 280.4 408.7 278.1C415.0 275.8 420.2 274.3 425.9 273.0C431.6 271.7 435.9 270.9 443.1 270.4C450.3 269.9 459.4 269.8 468.9 269.9C478.4 270.0 490.5 270.4 500.0 271.2C509.5 272.0 517.2 273.3 525.8 274.7C534.4 276.1 542.9 277.9 551.5 279.8C560.1 281.7 568.7 283.7 577.3 285.8C585.9 287.9 594.5 290.1 603.1 292.7C611.7 295.3 621.8 298.4 628.9 301.3C636.0 304.2 641.4 307.0 646.0 309.9C650.6 312.8 653.9 315.8 656.4 318.5C658.9 321.2 659.7 323.8 660.7 326.2C661.7 328.6 662.2 330.6 662.6 333.0C663.0 335.4 663.6 337.1 663.0 340.3C662.4 343.5 661.1 348.3 658.7 352.3C656.3 356.3 652.7 360.4 648.4 364.4C644.1 368.4 638.3 372.7 632.9 376.4C627.5 380.1 621.5 383.4 615.8 386.7C610.1 390.0 605.0 393.1 598.6 396.2C592.2 399.3 585.0 401.8 577.5 405.3C570.0 408.8 558.6 414.7 553.4 417.3C548.2 419.9 552.5 419.8 546.5 420.8C540.5 421.8 525.0 422.8 517.3 423.3C509.6 423.8 507.2 424.0 500.1 423.8C493.0 423.6 481.5 422.8 474.4 422.1C467.2 421.5 462.9 420.8 457.2 419.9C451.5 419.0 445.2 417.7 440.0 416.5C434.8 415.3 430.1 414.5 425.9 412.8C421.7 411.1 418.1 409.1 414.7 406.5C411.3 403.9 408.9 401.1 405.3 397.3C401.7 393.5 397.0 389.3 393.3 383.6C389.6 377.9 385.9 370.6 383.0 363.0C380.1 355.4 377.3 344.0 375.8 338.0C374.3 332.0 374.3 330.3 374.0 327.0C373.7 323.7 373.8 320.8 373.9 318.0Z" fill="url(#gLensR)"/>
<g clip-path="url(#cLensR)">
<path d="M662.6 333.0C662.7 334.2 663.6 337.1 663.0 340.3C662.4 343.5 661.1 348.3 658.7 352.3C656.3 356.3 652.7 360.4 648.4 364.4C644.1 368.4 638.3 372.7 632.9 376.4C627.5 380.1 621.5 383.4 615.8 386.7C610.1 390.0 605.0 393.1 598.6 396.2C592.2 399.3 585.0 401.8 577.5 405.3C570.0 408.8 558.6 414.7 553.4 417.3C548.2 419.9 549.4 419.4 546.5 420.8C543.6 422.2 539.6 424.3 536.0 426.0C532.4 427.7 526.8 430.2 525.0 431.0" stroke="#cbcbcb" stroke-width="14" fill="none" filter="url(#b3)"/>
</g>
<path d="M226.3 231C229.5 232.6 232.5 233.2 235.6 234.2C234.2 237.5 233.4 240 232.8 243.5C229.8 240 227.5 236 226.3 231Z" fill="#060606"/>
<path d="M737.4 284.3C737.3 286.9 736.9 295.0 736.6 300.0C736.3 305.0 736.1 309.1 735.6 314.4C735.1 319.6 734.5 325.8 733.9 331.5C733.3 337.2 732.6 343.0 731.8 348.7C731.0 354.4 730.0 361.2 729.1 365.9C728.2 370.6 727.1 375.1 726.7 377.0" stroke="#e4e4e4" stroke-width="1.6" fill="none" filter="url(#b04)"/>
<path d="M762.8 286.1C761.7 287.1 759.2 294.8 758.5 297.5C757.8 300.2 757.8 306.6 757.0 309.2C756.2 311.8 753.3 317.2 751.9 319.4C750.5 321.6 746.1 326.4 744.6 328.2C743.1 330.0 738.5 333.8 738.8 334.7C739.1 335.6 745.6 336.1 747.5 336.3C749.4 336.5 753.9 334.9 754.8 336.5C755.7 338.1 754.7 347.6 754.8 350.0C754.9 352.4 755.0 356.1 755.5 357.4C756.0 358.7 757.9 361.0 759.2 361.0C760.5 361.0 765.0 358.8 766.5 357.4C768.0 356.0 771.2 350.8 772.3 348.6C773.4 346.4 775.5 340.8 776.0 338.4C776.5 336.0 776.4 329.9 776.7 328.2C777.0 326.5 777.3 325.3 778.2 323.8C779.1 322.3 784.5 316.3 784.3 315.0C784.1 313.7 777.8 314.0 776.7 312.8C775.6 311.6 775.0 306.8 774.5 305.0C774.0 303.2 773.1 299.4 772.3 297.5C771.5 295.6 769.1 290.1 768.0 288.8C766.9 287.5 763.9 285.1 762.8 286.1Z" fill="url(#gProp)"/>
<path d="M762.0 286.0C761.4 288.1 759.2 294.8 758.2 298.4C757.2 302.0 757.4 304.4 756.3 307.8C755.2 311.2 753.6 315.6 751.6 319.1C749.6 322.6 746.2 325.9 744.0 328.6C741.8 331.3 739.3 334.1 738.4 335.2" stroke="#555" stroke-width="0.7" fill="none"/>
<path d="M753 336L757 335.3L767 332L764 336L756 338.8Z" fill="#1a1a1a" filter="url(#b08)"/>
<path d="M755.5 338L760 337L759 352L756 350Z" fill="#b0b0b0" filter="url(#b1)"/>
</g>


<g id="cube">
<path d="M951.4 59.3L972.1 55L1000 58.1L981.7 62.3Z" fill="#a6a6a6" stroke="#585858" stroke-width="1.1" stroke-linejoin="round"/>
<path d="M951.4 59.3L981.7 62.3L981.5 99.9L952.3 93Z" fill="url(#gCubeF)" stroke="#585858" stroke-width="1.1" stroke-linejoin="round"/>
<path d="M981.7 62.3L1000 58.1L999.6 88.1L981.5 99.9Z" fill="url(#gCubeR)" stroke="#585858" stroke-width="1.1" stroke-linejoin="round"/>
<path d="M962 57.6L990.5 60.4" stroke="#6a6a6a" stroke-width="0.9"/>
<text transform="matrix(1,0.15,0,1,954.6,79.6)" font-size="6.4" font-weight="bold" fill="#5a5a5a">FRONT</text>
<text transform="matrix(0.62,-0.18,0,1,984.6,83)" font-size="6.6" font-weight="bold" fill="#5a5a5a">RIGHT</text>
</g>


<g id="gizmo" font-size="8" font-weight="bold">
<path d="M21.3 559.2L21.3 549.5" stroke="#1ec01e" stroke-width="1"/>
<path d="M21.5 559.6L29.5 561.3" stroke="#d02020" stroke-width="1"/>
<path d="M21.3 559.6L15 562.6" stroke="#2030e0" stroke-width="1"/>
<text x="19" y="546.5" fill="#1ec01e">y</text>
<text x="29" y="560.8" fill="#d02020">x</text>
<text x="12.5" y="561" fill="#2030e0">z</text>
</g>

</g>
<g font-size="8" font-weight="bold" fill="#303030" letter-spacing="0.12" opacity="0.55"><text x="13.6" y="40.0">Verts:</text><text x="74.6" y="40.0">288716</text><text x="148.2" y="40.0">0</text><text x="198.2" y="40.0">0</text><text x="13.6" y="55.5">Edges:</text><text x="74.6" y="55.5">577297</text><text x="148.2" y="55.5">0</text><text x="198.2" y="55.5">0</text><text x="13.6" y="70.9">Faces:</text><text x="74.6" y="70.9">288677</text><text x="148.2" y="70.9">0</text><text x="198.2" y="70.9">0</text><text x="13.6" y="86.3">Tris:</text><text x="74.6" y="86.3">577240</text><text x="148.2" y="86.3">0</text><text x="198.2" y="86.3">0</text><text x="13.6" y="101.8">UVs:</text><text x="74.6" y="101.8">293863</text><text x="148.2" y="101.8">0</text><text x="198.2" y="101.8">0</text><text x="495.20000000000005" y="574.5">persp</text></g><g font-size="8" font-weight="bold" fill="#e6e6e6" letter-spacing="0.12"><text x="13" y="39.4">Verts:</text><text x="74" y="39.4">288716</text><text x="147.6" y="39.4">0</text><text x="197.6" y="39.4">0</text><text x="13" y="54.9">Edges:</text><text x="74" y="54.9">577297</text><text x="147.6" y="54.9">0</text><text x="197.6" y="54.9">0</text><text x="13" y="70.3">Faces:</text><text x="74" y="70.3">288677</text><text x="147.6" y="70.3">0</text><text x="197.6" y="70.3">0</text><text x="13" y="85.8">Tris:</text><text x="74" y="85.8">577240</text><text x="147.6" y="85.8">0</text><text x="197.6" y="85.8">0</text><text x="13" y="101.2">UVs:</text><text x="74" y="101.2">293863</text><text x="147.6" y="101.2">0</text><text x="197.6" y="101.2">0</text><text x="494.6" y="573.9">persp</text></g>
<g font-size="9" fill="#c4c4c4"><text x="8" y="10.6" textLength="19" lengthAdjust="spacingAndGlyphs">View</text><text x="38.5" y="10.6" textLength="33" lengthAdjust="spacingAndGlyphs">Shading</text><text x="83.5" y="10.6" textLength="32.6" lengthAdjust="spacingAndGlyphs">Lighting</text><text x="128.5" y="10.6" textLength="21.6" lengthAdjust="spacingAndGlyphs">Show</text><text x="162.5" y="10.6" textLength="36.3" lengthAdjust="spacingAndGlyphs">Renderer</text><text x="210" y="10.6" textLength="25.2" lengthAdjust="spacingAndGlyphs">Panels</text></g><rect x="4" y="16.5" width="2" height="11" rx="1" fill="#6e6e6e"/><rect x="4.7" y="16" width="0.6" height="12" fill="#6e6e6e"/><rect x="85.5" y="16.5" width="2" height="11" rx="1" fill="#6e6e6e"/><rect x="86.2" y="16" width="0.6" height="12" fill="#6e6e6e"/><rect x="196.5" y="16.5" width="2" height="11" rx="1" fill="#6e6e6e"/><rect x="197.2" y="16" width="0.6" height="12" fill="#6e6e6e"/><rect x="307.5" y="16.5" width="2" height="11" rx="1" fill="#6e6e6e"/><rect x="308.2" y="16" width="0.6" height="12" fill="#6e6e6e"/><rect x="418.7" y="16.5" width="2" height="11" rx="1" fill="#6e6e6e"/><rect x="419.4" y="16" width="0.6" height="12" fill="#6e6e6e"/><rect x="486" y="16.5" width="2" height="11" rx="1" fill="#6e6e6e"/><rect x="486.7" y="16" width="0.6" height="12" fill="#6e6e6e"/><rect x="509.4" y="16.5" width="2" height="11" rx="1" fill="#6e6e6e"/><rect x="510.09999999999997" y="16" width="0.6" height="12" fill="#6e6e6e"/><rect x="561.5" y="16.5" width="2" height="11" rx="1" fill="#6e6e6e"/><rect x="562.2" y="16" width="0.6" height="12" fill="#6e6e6e"/><path d="M10.5 17.5L12 16L22 16L22 26.5L20.5 28.2L10.5 28.2Z" fill="#2f8fc8"/><rect x="12" y="16" width="10" height="10.5" fill="#41a6dc"/><text x="14.2" y="24.3" font-size="7.6" font-weight="bold" fill="#ffffff">A</text><rect x="26.5" y="18.3" width="9" height="9" fill="none" stroke="#9a9a9a" stroke-width="0.9"/><rect x="28" y="19.8" width="6" height="6" fill="#35a9c2"/><rect x="25.5" y="17.3" width="2" height="2" fill="#a0a0a0"/><rect x="34.5" y="17.3" width="2" height="2" fill="#a0a0a0"/><rect x="25.5" y="26.3" width="2" height="2" fill="#a0a0a0"/><rect x="34.5" y="26.3" width="2" height="2" fill="#a0a0a0"/><rect x="40" y="17" width="11" height="10.5" fill="#4a525b"/><path d="M40.5 20.5H47.5V27" stroke="#434a52" stroke-width="1" fill="none"/><circle cx="60" cy="22.3" r="5" fill="#565656"/><path d="M60 22.3L60 17.3A5 5 0 0 0 55.3 20.5Z" fill="#58526a"/><path d="M60 22.3L60 17.3A5 5 0 0 1 63.5 18.8Z" fill="#526650"/><path d="M60 22.3L55.3 20.5A5 5 0 0 0 55.4 24.3Z" fill="#6a5058"/><rect x="71.5" y="17" width="9.5" height="8" fill="#4e5a52"/><rect x="70.2" y="18.3" width="9.5" height="8" fill="#4c5268"/><rect x="69" y="19.6" width="9.5" height="8" fill="#555c66"/><path d="M70 27L73 24L75 25.5L77.5 22.5V27Z" fill="#666"/><rect x="92.6" y="20" width="8.2" height="4.7" rx="0.6" fill="#d4d4d4"/><path d="M100.8 22.35L104.0 19.7V25.0Z" fill="#d4d4d4"/><rect x="107.5" y="18.8" width="6.8" height="4.2" rx="0.6" fill="#d4d4d4"/><path d="M114.3 20.900000000000002L117.5 18.5V23.3Z" fill="#d4d4d4"/><rect x="107" y="22.6" width="5" height="4.6" rx="0.6" fill="#35a9c2"/><path d="M108.2 22.8V21.6A1.3 1.3 0 0 1 110.8 21.6V22.8" stroke="#35a9c2" stroke-width="0.9" fill="none"/><rect x="109" y="24" width="1" height="1.6" fill="#2a5560"/><rect x="122" y="18.8" width="7.2" height="4.2" rx="0.6" fill="#d4d4d4"/><path d="M129.2 20.900000000000002L132.39999999999998 18.5V23.3Z" fill="#d4d4d4"/><circle cx="125.5" cy="23.8" r="2.5" fill="#444" stroke="#35a9c2" stroke-width="1.2"/><path d="M140 18H145.2V26.3L142.6 24.2L140 26.3Z" fill="#c8c8c8"/><path d="M152 27.3L155 25H163L160 27.3Z" fill="none" stroke="#b0b0b0" stroke-width="0.9"/><path d="M156 20.5L159.3 17.8V24.6L156 27Z" fill="#35a9c2"/><path d="M167.2 21.5H172.5M171 17.5V22.5" stroke="#c8c8c8" stroke-width="1"/><path d="M171 16.6L172.2 18.4H169.8Z" fill="#c8c8c8"/><path d="M166.2 21.5L168 20.3V22.7Z" fill="#c8c8c8"/><circle cx="174.8" cy="23.4" r="2.4" fill="none" stroke="#35a9c2" stroke-width="1.1"/><path d="M173 25.3L170.3 27.6" stroke="#35a9c2" stroke-width="1.3"/><path d="M183.2 26.2L190.3 18.6" stroke="#35a9c2" stroke-width="2.6" stroke-linecap="round"/><path d="M181.6 27.8L182.4 25.4L184 27Z" fill="#d0d0d0"/><rect x="202.5" y="15.3" width="13.7" height="13.7" fill="#5285a6"/><rect x="205.3" y="18.3" width="8.8" height="8.4" fill="#333"/><path d="M205.3 18.3H214.1V26.7H205.3ZM208.2 18.3V26.7M211.2 18.3V26.7M205.3 21.1H214.1M205.3 23.9H214.1" stroke="#e8e8e8" stroke-width="0.9" fill="none"/><rect x="218.6" y="18" width="11.4" height="9" fill="#9a9a9a"/><rect x="219.6" y="20" width="9.4" height="5" fill="#303030"/><rect x="219.6" y="18.7" width="1" height="0.8" fill="#444"/><rect x="219.6" y="25.6" width="1" height="0.8" fill="#444"/><rect x="221.6" y="18.7" width="1" height="0.8" fill="#444"/><rect x="221.6" y="25.6" width="1" height="0.8" fill="#444"/><rect x="223.6" y="18.7" width="1" height="0.8" fill="#444"/><rect x="223.6" y="25.6" width="1" height="0.8" fill="#444"/><rect x="225.6" y="18.7" width="1" height="0.8" fill="#444"/><rect x="225.6" y="25.6" width="1" height="0.8" fill="#444"/><rect x="227.6" y="18.7" width="1" height="0.8" fill="#444"/><rect x="227.6" y="25.6" width="1" height="0.8" fill="#444"/><rect x="233.2" y="18.2" width="10.6" height="8.8" fill="#3a3a3a" stroke="#c4c4c4" stroke-width="0.9"/><circle cx="238.5" cy="22.6" r="2.5" fill="#3fb6cc"/><rect x="246.5" y="15.5" width="13" height="13.3" fill="#3c3c3c"/><rect x="248" y="17.5" width="10" height="9.5" fill="#484848"/><circle cx="253" cy="22.4" r="3" fill="#3a3a3a"/><rect x="262.7" y="18.2" width="10.6" height="8.8" fill="#3a3a3a" stroke="#c4c4c4" stroke-width="0.9"/><path d="M268 18.8V26.4M263.5 22.6H272.5" stroke="#3fb6cc" stroke-width="1" stroke-dasharray="1.6 1.2"/><rect x="277.2" y="18.2" width="10.6" height="8.8" fill="#3a3a3a" stroke="#c4c4c4" stroke-width="0.9"/><circle cx="284.6" cy="21" r="1.8" fill="#3fb6cc"/><path d="M279.3 25.7L281.5 22.3L283.7 25.7Z" fill="#3fb6cc"/><rect x="292.2" y="18.2" width="10.6" height="8.8" fill="#3a3a3a" stroke="#c4c4c4" stroke-width="0.9"/><path d="M294.4 20H300.6M297.5 20V26" stroke="#3fb6cc" stroke-width="1.3" fill="none"/><path d="M316 19.8L321 17L326 19.8L321 22.6Z" fill="none" stroke="#b4b4b4" stroke-width="0.8" stroke-linejoin="round"/><path d="M316 19.8L321 22.6V28L316 25.2Z" fill="none" stroke="#b4b4b4" stroke-width="0.8" stroke-linejoin="round"/><path d="M326 19.8L321 22.6V28L326 25.2Z" fill="none" stroke="#b4b4b4" stroke-width="0.8" stroke-linejoin="round"/><path d="M321 17V22.4L316 25.2M321 22.4L326 25.2" stroke="#8a8a8a" stroke-width="0.5" fill="none" opacity="0.55"/><rect x="328.5" y="15.3" width="13.7" height="13.7" fill="#5285a6"/><path d="M330.3 19.6L335.3 16.8L340.3 19.6L335.3 22.4Z" fill="#7fdcea" stroke="#2f8ea0" stroke-width="0.8" stroke-linejoin="round"/><path d="M330.3 19.6L335.3 22.4V27.8L330.3 25.0Z" fill="#4fc3d6" stroke="#2f8ea0" stroke-width="0.8" stroke-linejoin="round"/><path d="M340.3 19.6L335.3 22.4V27.8L340.3 25.0Z" fill="#3aa9bd" stroke="#2f8ea0" stroke-width="0.8" stroke-linejoin="round"/><g clip-path="url(#cHalf)"><rect x="345" y="17" width="5.6" height="11" fill="#d2d2d2"/><rect x="350.60" y="16.78" width="1.25" height="1.25" fill="#c8c8c8"/><rect x="350.60" y="19.28" width="1.25" height="1.25" fill="#c8c8c8"/><rect x="350.60" y="21.78" width="1.25" height="1.25" fill="#c8c8c8"/><rect x="350.60" y="24.28" width="1.25" height="1.25" fill="#c8c8c8"/><rect x="350.60" y="26.78" width="1.25" height="1.25" fill="#c8c8c8"/><rect x="351.85" y="18.03" width="1.25" height="1.25" fill="#c8c8c8"/><rect x="351.85" y="20.53" width="1.25" height="1.25" fill="#c8c8c8"/><rect x="351.85" y="23.03" width="1.25" height="1.25" fill="#c8c8c8"/><rect x="351.85" y="25.53" width="1.25" height="1.25" fill="#c8c8c8"/><rect x="353.10" y="16.78" width="1.25" height="1.25" fill="#c8c8c8"/><rect x="353.10" y="19.28" width="1.25" height="1.25" fill="#c8c8c8"/><rect x="353.10" y="21.78" width="1.25" height="1.25" fill="#c8c8c8"/><rect x="353.10" y="24.28" width="1.25" height="1.25" fill="#c8c8c8"/><rect x="353.10" y="26.78" width="1.25" height="1.25" fill="#c8c8c8"/><rect x="354.35" y="18.03" width="1.25" height="1.25" fill="#c8c8c8"/><rect x="354.35" y="20.53" width="1.25" height="1.25" fill="#c8c8c8"/><rect x="354.35" y="23.03" width="1.25" height="1.25" fill="#c8c8c8"/><rect x="354.35" y="25.53" width="1.25" height="1.25" fill="#c8c8c8"/><rect x="355.60" y="16.78" width="1.25" height="1.25" fill="#c8c8c8"/><rect x="355.60" y="19.28" width="1.25" height="1.25" fill="#c8c8c8"/><rect x="355.60" y="21.78" width="1.25" height="1.25" fill="#c8c8c8"/><rect x="355.60" y="24.28" width="1.25" height="1.25" fill="#c8c8c8"/><rect x="355.60" y="26.78" width="1.25" height="1.25" fill="#c8c8c8"/></g><path d="M362.2 20.6L365 19.2L367.8 20.6L365 22.2Z" fill="#7fdcea"/><path d="M362.2 20.8L365 22.4V26.6L362.2 25Z" fill="#4fc3d6"/><path d="M367.8 20.8L365 22.4V26.6L367.8 25Z" fill="#3aa9bd"/><path d="M360 19.8L365 17L370 19.8L365 22.6Z" fill="none" stroke="#b8b8b8" stroke-width="0.8" stroke-linejoin="round"/><path d="M360 19.8L365 22.6V28L360 25.2Z" fill="none" stroke="#b8b8b8" stroke-width="0.8" stroke-linejoin="round"/><path d="M370 19.8L365 22.6V28L370 25.2Z" fill="none" stroke="#b8b8b8" stroke-width="0.8" stroke-linejoin="round"/><path d="M365 22.6V28" stroke="#b8b8b8" stroke-width="0.8"/><rect x="372.3" y="15.3" width="13.7" height="13.7" fill="#5285a6"/><circle cx="379.3" cy="22.3" r="5" fill="#3a3a3a"/><g clip-path="url(#cTex)"><rect x="373.45" y="16.45" width="1.3" height="1.3" fill="#d8d8d8"/><rect x="373.45" y="19.05" width="1.3" height="1.3" fill="#d8d8d8"/><rect x="373.45" y="21.65" width="1.3" height="1.3" fill="#d8d8d8"/><rect x="373.45" y="24.25" width="1.3" height="1.3" fill="#d8d8d8"/><rect x="373.45" y="26.85" width="1.3" height="1.3" fill="#d8d8d8"/><rect x="374.75" y="17.75" width="1.3" height="1.3" fill="#d8d8d8"/><rect x="374.75" y="20.35" width="1.3" height="1.3" fill="#d8d8d8"/><rect x="374.75" y="22.95" width="1.3" height="1.3" fill="#d8d8d8"/><rect x="374.75" y="25.55" width="1.3" height="1.3" fill="#d8d8d8"/><rect x="376.05" y="16.45" width="1.3" height="1.3" fill="#d8d8d8"/><rect x="376.05" y="19.05" width="1.3" height="1.3" fill="#d8d8d8"/><rect x="376.05" y="21.65" width="1.3" height="1.3" fill="#d8d8d8"/><rect x="376.05" y="24.25" width="1.3" height="1.3" fill="#d8d8d8"/><rect x="376.05" y="26.85" width="1.3" height="1.3" fill="#d8d8d8"/><rect x="377.35" y="17.75" width="1.3" height="1.3" fill="#d8d8d8"/><rect x="377.35" y="20.35" width="1.3" height="1.3" fill="#d8d8d8"/><rect x="377.35" y="22.95" width="1.3" height="1.3" fill="#d8d8d8"/><rect x="377.35" y="25.55" width="1.3" height="1.3" fill="#d8d8d8"/><rect x="378.65" y="16.45" width="1.3" height="1.3" fill="#d8d8d8"/><rect x="378.65" y="19.05" width="1.3" height="1.3" fill="#d8d8d8"/><rect x="378.65" y="21.65" width="1.3" height="1.3" fill="#d8d8d8"/><rect x="378.65" y="24.25" width="1.3" height="1.3" fill="#d8d8d8"/><rect x="378.65" y="26.85" width="1.3" height="1.3" fill="#d8d8d8"/><rect x="379.95" y="17.75" width="1.3" height="1.3" fill="#d8d8d8"/><rect x="379.95" y="20.35" width="1.3" height="1.3" fill="#d8d8d8"/><rect x="379.95" y="22.95" width="1.3" height="1.3" fill="#d8d8d8"/><rect x="379.95" y="25.55" width="1.3" height="1.3" fill="#d8d8d8"/><rect x="381.25" y="16.45" width="1.3" height="1.3" fill="#d8d8d8"/><rect x="381.25" y="19.05" width="1.3" height="1.3" fill="#d8d8d8"/><rect x="381.25" y="21.65" width="1.3" height="1.3" fill="#d8d8d8"/><rect x="381.25" y="24.25" width="1.3" height="1.3" fill="#d8d8d8"/><rect x="381.25" y="26.85" width="1.3" height="1.3" fill="#d8d8d8"/><rect x="382.55" y="17.75" width="1.3" height="1.3" fill="#d8d8d8"/><rect x="382.55" y="20.35" width="1.3" height="1.3" fill="#d8d8d8"/><rect x="382.55" y="22.95" width="1.3" height="1.3" fill="#d8d8d8"/><rect x="382.55" y="25.55" width="1.3" height="1.3" fill="#d8d8d8"/><rect x="383.85" y="16.45" width="1.3" height="1.3" fill="#d8d8d8"/><rect x="383.85" y="19.05" width="1.3" height="1.3" fill="#d8d8d8"/><rect x="383.85" y="21.65" width="1.3" height="1.3" fill="#d8d8d8"/><rect x="383.85" y="24.25" width="1.3" height="1.3" fill="#d8d8d8"/><rect x="383.85" y="26.85" width="1.3" height="1.3" fill="#d8d8d8"/></g><circle cx="394" cy="20.8" r="2.8" fill="#e0e0e0"/><rect x="392.6" y="23" width="2.8" height="3" fill="#d0d0d0"/><rect x="393" y="26.2" width="2" height="1" fill="#aaa"/><path d="M394 15.6V17M389.6 18L390.7 18.8M398.4 18L397.3 18.8M389 22H390.2M399 22H397.8" stroke="#d0d0d0" stroke-width="0.8"/><circle cx="410.3" cy="21.8" r="3.7" fill="#3fb6cc"/><path d="M403.5 24.5L405 23L406.5 24.5L405 26ZM406 25.5L407.2 24.3L408.4 25.5L407.2 26.7Z" fill="#9a9a9a"/><circle cx="432" cy="20.3" r="4.4" fill="#b8b8b8"/><path d="M427 24.6L432 27.4L437 24.6" stroke="#35a9c2" stroke-width="1.1" fill="none"/><path d="M428.5 23.3L432 25.2L435.5 23.3" stroke="#2f6f7c" stroke-width="0.9" fill="none"/><path d="M444.3 26.2L448.5 21.5" stroke="#6a6a6a" stroke-width="5" stroke-linecap="round"/><circle cx="449.6" cy="20" r="3.5" fill="#c8c8c8"/><rect x="454.3" y="15.3" width="13.7" height="13.7" fill="#5285a6"/><circle cx="461" cy="22.2" r="4.6" fill="none" stroke="#3fc0d8" stroke-width="1.4"/><path d="M461.5 16.6A5.6 5.6 0 0 1 461.5 27.8" stroke="#e0e0e0" stroke-width="1.5" fill="none" stroke-dasharray="2.4 1"/><circle cx="461" cy="22.2" r="3.6" fill="#4a7d9e"/><rect x="470.5" y="15.5" width="12.2" height="13.3" fill="#3e3e3e"/><rect x="472.3" y="17.5" width="5.5" height="5.5" fill="#3a4a4e"/><rect x="474.8" y="20.5" width="6.2" height="6.2" fill="#36545a"/><rect x="494.3" y="17.8" width="6.4" height="6.2" fill="none" stroke="#35a9c2" stroke-width="1" stroke-dasharray="1.6 1.1"/><path d="M500 20.8V27.6L501.8 25.9L503 28.3L504 27.8L502.9 25.5L505 25.2Z" fill="#b8b8b8"/><rect x="516" y="15.5" width="12.8" height="13.3" fill="#3a3a3a"/><rect x="520.3" y="18.2" width="6.5" height="6" fill="#8a8a8a" stroke="#e4e4e4" stroke-width="1"/><rect x="517.8" y="21" width="6.5" height="6" fill="#a0a0a0" stroke="#e4e4e4" stroke-width="1"/><rect x="530.5" y="15.5" width="12.6" height="13.3" fill="#3a3a3a"/><rect x="536.5" y="18.2" width="5.3" height="5.6" fill="none" stroke="#c8c8c8" stroke-width="0.9"/><rect x="532.3" y="20.8" width="6.8" height="6.2" fill="#c4c4c4"/><rect x="545.3" y="15.5" width="12.8" height="13.3" fill="#3a3a3a"/><rect x="547.3" y="18.2" width="9" height="8.8" fill="#333" stroke="#d0d0d0" stroke-width="0.9"/><path d="M549.3 20L554.8 25.6" stroke="#e0e0e0" stroke-width="1.3"/><circle cx="549.5" cy="20.2" r="1" fill="#e0e0e0"/><circle cx="575.5" cy="22.1" r="4.5" fill="#dcdcdc"/><circle cx="575.5" cy="22.1" r="1.7" fill="#444"/><path d="M577.12 22.60L577.17 26.39" stroke="#444" stroke-width="0.8"/><path d="M575.88 23.76L572.62 25.69" stroke="#444" stroke-width="0.8"/><path d="M574.25 23.26L570.95 21.40" stroke="#444" stroke-width="0.8"/><path d="M573.88 21.60L573.83 17.81" stroke="#444" stroke-width="0.8"/><path d="M575.12 20.44L578.38 18.51" stroke="#444" stroke-width="0.8"/><path d="M576.75 20.94L580.05 22.80" stroke="#444" stroke-width="0.8"/><rect x="584" y="16" width="29" height="11.4" rx="1.5" fill="#2b2b2b"/><text x="588.3" y="25.2" font-size="8.4" fill="#c8c8c8">0.00</text><rect x="621.5" y="17.6" width="5.6" height="9.4" fill="#e0e0e0"/><circle cx="621.8" cy="22.3" r="2.9" fill="#e0e0e0"/><path d="M622.6 19.6A2.7 2.7 0 0 1 622.6 25Z" fill="#333"/><rect x="631" y="16" width="29" height="11.4" rx="1.5" fill="#2b2b2b"/><text x="636" y="25.2" font-size="8.4" fill="#c8c8c8">1.00</text><rect x="663" y="15.3" width="14" height="13.7" fill="#5285a6"/><circle cx="670" cy="22.3" r="4.9" fill="#3fc0d0" stroke="#2a7f90" stroke-width="0.6"/><text x="666.6" y="24.1" font-size="4.6" font-weight="bold" fill="#20505a">ON</text><rect x="679.5" y="16" width="137" height="12.6" rx="1.5" fill="#5b5b5b"/><rect x="817.5" y="16" width="15" height="12.6" rx="1.5" fill="#5b5b5b"/><path d="M821.3 20.6H828.7L825 24.6Z" fill="#e0e0e0"/><text x="681.8" y="25.6" font-size="8.6" fill="#d4d4d4" textLength="104.5" lengthAdjust="spacingAndGlyphs">ACES 1.0 SDR-video (sRGB)</text>
</svg>
</body></html>
